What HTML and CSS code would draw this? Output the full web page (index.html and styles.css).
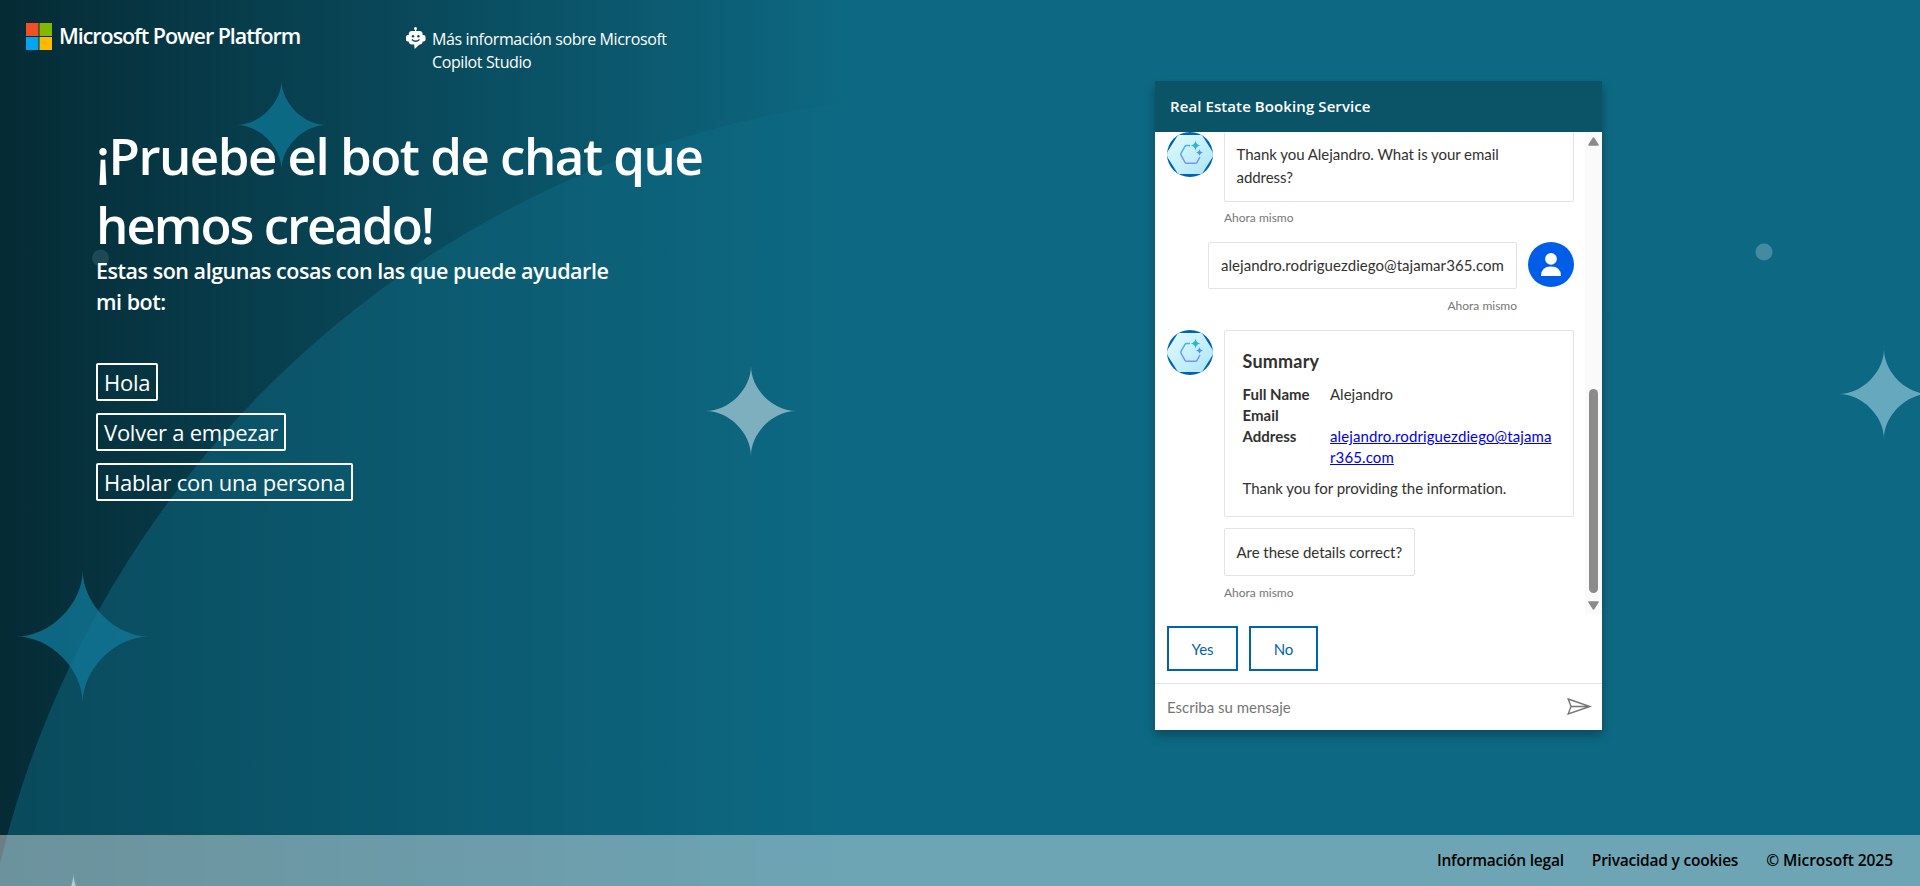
FILE: index.html
```html
<!DOCTYPE html>
<html lang="es">
<head>
<meta charset="utf-8">
<title>Microsoft Power Platform</title>
<link rel="stylesheet" href="styles.css">
</head>
<body>
<svg class="backdrop" width="1920" height="886" viewBox="0 0 1920 886" aria-hidden="true">
  <defs>
    <path id="star" d="M0 -45C0 -22 22 0 45 0C22 0 0 22 0 45C0 22 -22 0 -45 0C-22 0 0 -22 0 -45Z"/>
  </defs>
  <circle cx="977.600" cy="1098.700" r="1005.500" fill="#0d6983" opacity=".5"/>
  <use href="#star" transform="translate(281.5 125)" fill="#0d6c89" opacity=".92"/>
  <use href="#star" transform="translate(82.7 636.5) scale(1.48)" fill="#11799b" opacity=".75"/>
  <use href="#star" transform="translate(751 411)" fill="#7dafbf"/>
  <use href="#star" transform="translate(1884 394)" fill="#66a9bf"/>
  <use href="#star" transform="translate(73.5 918)" fill="#7dafbf"/>
  <circle cx="100.500" cy="258" r="8.500" fill="#6b9ba5" opacity=".22"/>
  <circle cx="1764" cy="252" r="8.500" fill="#448ba0"/>
</svg>

<svg width="0" height="0" class="defs" aria-hidden="true">
  <defs>
    <linearGradient id="hexFill" x1="0" y1="0" x2="1" y2="1"><stop offset="0" stop-color="#e2fafd"/><stop offset="1" stop-color="#ace6f8"/></linearGradient>
    <linearGradient id="hexLine" x1="0" y1="13" x2="0" y2="33" gradientUnits="userSpaceOnUse"><stop offset="0" stop-color="#35c0dd"/><stop offset="1" stop-color="#8a8cf0"/></linearGradient>
    <clipPath id="round"><ellipse cx="23" cy="22.500" rx="23" ry="22.500"/></clipPath>
    <symbol id="bot" viewBox="0 0 46 45">
      <g clip-path="url(#round)">
        <rect width="46" height="45" fill="#0063b1"/>
        <path d="M12.500 3h21q1.500 0 2.200 1.300L46 20.500q.8 2 0 4L35.700 40.700Q35 42 33.500 42h-21q-1.500 0-2.200-1.300L0 24.500q-.8-2 0-4L10.300 4.300Q11 3 12.500 3z" fill="url(#hexFill)"/>
        <path d="M23 13.500h-3.500q-1 0-1.500.9l-4 7q-.5.900 0 1.800l4 7.200q.5.900 1.500.9h9q1 0 1.500-.9l3-5.400" fill="none" stroke="url(#hexLine)" stroke-width="1.500"/>
        <path d="M28.500 8.500q.7 4.300 5 5q-4.300.7-5 5q-.7-4.300-5-5q4.300-.7 5-5z" fill="#2ab4dc"/>
        <path d="M32.500 17q.5 3 3.500 3.500q-3 .5-3.500 3.500q-.5-3-3.500-3.500q3-.5 3.500-3.500z" fill="#4a98e8"/>
      </g>
    </symbol>
  </defs>
</svg>

<div class="page">
  <header class="top">
    <div class="brand">
      <svg width="26" height="27" viewBox="0 0 26 27"><path fill="#f25022" d="M0 0h12.500v13H0z"/><path fill="#7fba00" d="M13.500 0H26v13H13.500z"/><path fill="#00a4ef" d="M0 14h12.500v13H0z"/><path fill="#ffb900" d="M13.500 14H26v13H13.500z"/></svg>
      <span>Microsoft Power Platform</span>
    </div>
    <a class="learn">
      <svg width="20" height="22" viewBox="0 0 20 22"><g fill="#fff"><circle cx="9.500" cy="1.500" r="1.500"/><path d="M9 2h1.200v3H9z"/><rect x="2.800" y="4" width="13.800" height="13.500" rx="3.200"/><rect x="0" y="8" width="19.500" height="6.500" rx="1.800"/><path d="M8 16.500h6.500L8.700 22z"/></g><g fill="#0a4553"><circle cx="7" cy="9.300" r="1.200"/><circle cx="12.400" cy="9.300" r="1.200"/></g><path d="M5.900 12.500q3.800 3.400 7.600 0" fill="none" stroke="#0a4553" stroke-width="1.300"/></svg>
      <span>Más información sobre Microsoft<br>Copilot Studio</span>
    </a>
  </header>

  <main class="main">
    <section class="intro">
      <h1>¡Pruebe el bot de chat que<br><span class="tight">hemos creado!</span></h1>
      <p>Estas son algunas cosas con las que puede ayudarle<br>mi bot:</p>
      <ul class="tags">
        <li>Hola</li>
        <li>Volver a empezar</li>
        <li>Hablar con una persona</li>
      </ul>
    </section>

    <section class="chat">
      <div class="chat-head">Real Estate Booking Service</div>
      <div class="log">
        <div class="messages">
          <div class="row first">
            <svg class="avatar" width="46" height="45"><use href="#bot"/></svg>
            <div class="stack">
              <div class="bubble cut">Thank you Alejandro. What is your email<br>address?</div>
              <div class="time">Ahora mismo</div>
            </div>
          </div>
          <div class="row mine">
            <div class="stack">
              <div class="bubble user">alejandro.rodriguezdiego@tajamar365.com</div>
              <div class="time late">Ahora mismo</div>
            </div>
            <svg class="avatar" width="46" height="45" viewBox="0 0 46 45"><ellipse cx="23" cy="22.500" rx="23" ry="22.500" fill="#005de8"/><circle cx="23" cy="16.800" r="5.900" fill="#fff"/><path d="M13 34q0-9.500 10-9.500T33 34z" fill="#fff"/></svg>
          </div>
          <div class="row">
            <svg class="avatar" width="46" height="45"><use href="#bot"/></svg>
            <div class="stack">
              <div class="card">
                <h2>Summary</h2>
                <dl>
                  <dt>Full Name</dt><dd>Alejandro</dd>
                  <dt>Email<br>Address</dt><dd class="mail"><a href="#">alejandro.rodriguezdiego@tajamar365.com</a></dd>
                </dl>
                <p>Thank you for providing the information.</p>
              </div>
              <div class="bubble ask">Are these details correct?</div>
              <div class="time late">Ahora mismo</div>
            </div>
          </div>
        </div>
        <div class="scroll">
          <svg width="11" height="9" viewBox="0 0 11 9"><path d="M5.500 1L10 8H1z" fill="#8b8b8b" stroke="#8b8b8b" stroke-width="1.500" stroke-linejoin="round"/></svg>
          <div class="thumb"></div>
          <svg width="11" height="9" viewBox="0 0 11 9"><path d="M5.500 8L10 1H1z" fill="#8b8b8b" stroke="#8b8b8b" stroke-width="1.500" stroke-linejoin="round"/></svg>
        </div>
      </div>
      <div class="choices"><button class="yes">Yes</button><button class="no">No</button></div>
      <div class="compose">
        <span>Escriba su mensaje</span>
        <svg width="25" height="17" viewBox="0 0 25 17"><path d="M1.200 1L23 8.500L1.200 16L4 8.500zM4 8.500h19" fill="none" stroke="#767676" stroke-width="1.400"/></svg>
      </div>
    </section>
  </main>

  <footer class="foot">
    <span class="legal">Información legal</span>
    <span class="privacy">Privacidad y cookies</span>
    <span>© Microsoft 2025</span>
  </footer>
</div>
</body>
</html>
```
FILE: styles.css
```css
* { box-sizing: border-box; }
body {
  margin: 0;
  height: 886px;
  overflow: hidden;
  position: relative;
  font-family: "Open Sans", "Noto Sans", sans-serif;
  color: #fff;
  background: linear-gradient(90deg, #052b35 0, #0d6983 860px);
}
h1, h2, p, ul, dl, dd { margin: 0; padding: 0; }
.backdrop { position: absolute; left: 0; top: 0; }
.defs { position: absolute; }
.page { position: relative; height: 886px; display: flex; flex-direction: column; }

.top { display: flex; height: 81px; padding-left: 26px; }
.brand { display: flex; gap: 7px; width: 380px; padding-top: 23px; font-size: 21.5px; font-weight: 600; line-height: 30px; letter-spacing: -1.05px; }
.brand span { margin-top: -2px; white-space: nowrap; }
.learn { display: flex; gap: 6px; padding-top: 27px; font-size: 16px; line-height: 23px; letter-spacing: -.39px; }
.learn span { margin-top: 1px; }

.main { flex: 1; display: flex; align-items: flex-start; }
.intro { width: 1155px; padding: 40px 0 0 96px; }
h1 { font-size: 51px; line-height: 69px; font-weight: 600; letter-spacing: -1.5px; }
.tight { letter-spacing: -2px; }
.intro p { margin-top: -4px; font-size: 21.5px; line-height: 31px; font-weight: 600; letter-spacing: -.47px; }
.tags { list-style: none; display: flex; flex-direction: column; align-items: flex-start; gap: 12px; margin-top: 46px; font-size: 22px; line-height: 34px; letter-spacing: -.24px; }
.tags li { border: 2px solid #fff; border-radius: 2px; padding: 0 6px; }

.chat { width: 447px; height: 649px; display: flex; flex-direction: column; background: #fff; color: #323130; font-family: Lato, sans-serif; font-size: 15px; box-shadow: 0 5px 10px rgba(0, 0, 0, .3); }
.chat-head { height: 51px; padding-left: 15px; background: #0b5468; color: #fff; font: 600 15px/51px "Open Sans", sans-serif; letter-spacing: .09px; }
.log { display: flex; height: 483px; overflow: hidden; }
.messages { flex: 1; padding: 0 11px 0 12px; display: flex; flex-direction: column; gap: 16px; }
.row { display: flex; align-items: flex-start; gap: 11px; }
.mine { justify-content: flex-end; }
.stack { flex: 1; display: flex; flex-direction: column; align-items: flex-start; }
.mine .stack { align-items: flex-end; }
.avatar { flex: none; }
.bubble { border: 1px solid #e3e3e3; border-radius: 2px; padding: 11px 12px; line-height: 23px; white-space: nowrap; }
.cut { align-self: stretch; border-top: 0; padding: 10.5px 12px 12.5px 11.5px; height: 70px; letter-spacing: -.05px; }
.user { padding: 11px 12px 11px; letter-spacing: .05px; }
.ask { margin-top: 11px; height: 48px; padding: 11.5px 12px 10.5px 11.5px; letter-spacing: -.05px; }
.time { margin-top: 8px; font-size: 12px; line-height: 16px; color: #767676; }
.late { margin-top: 9px; }
.card { align-self: stretch; height: 187px; border: 1px solid #e3e3e3; border-radius: 2px; padding: 17.5px 17.5px; }
h2 { font-size: 18px; line-height: 24px; font-weight: 700; letter-spacing: .2px; }
dl { display: grid; grid-template-columns: 87.5px 1fr; margin-top: 11px; line-height: 21.3px; }
dt { font-weight: 700; }
.mail { padding-top: 21.300px; width: 225px; word-break: break-all; letter-spacing: .11px; }
.mail a { color: #00e; }
.card p { margin-top: 8px; line-height: 22px; letter-spacing: -.04px; font-variant-ligatures: common-ligatures; }
.scroll { width: 17px; background: #fafafa; display: flex; flex-direction: column; align-items: center; padding-top: 5px; }
.thumb { width: 9px; height: 204px; border-radius: 5px; background: #8b8b8b; margin: 243px 0 8px; }
.choices { display: flex; gap: 11px; padding: 12px 12px 0; height: 69px; }
.choices button { height: 45px; border: 2px solid #0063b1; background: #fff; color: #0063b1; font: 15px Lato, sans-serif; padding: 0; }
.yes { width: 71px; }
.no { width: 69px; }
.compose { flex: 1; display: flex; justify-content: space-between; padding: 0 10px 0 12px; border-top: 1px solid #e3e3e3; color: #767676; line-height: 46px; }
.compose svg { margin-top: 14px; }

.foot { height: 51px; display: flex; justify-content: flex-end; gap: 28px; padding-right: 27px; background: rgba(255, 255, 255, .4); color: #000; font-size: 15.500px; line-height: 50px; font-weight: 600; letter-spacing: -.05px; }
.legal { letter-spacing: -.22px; }
.privacy { letter-spacing: -.22px; }
```
